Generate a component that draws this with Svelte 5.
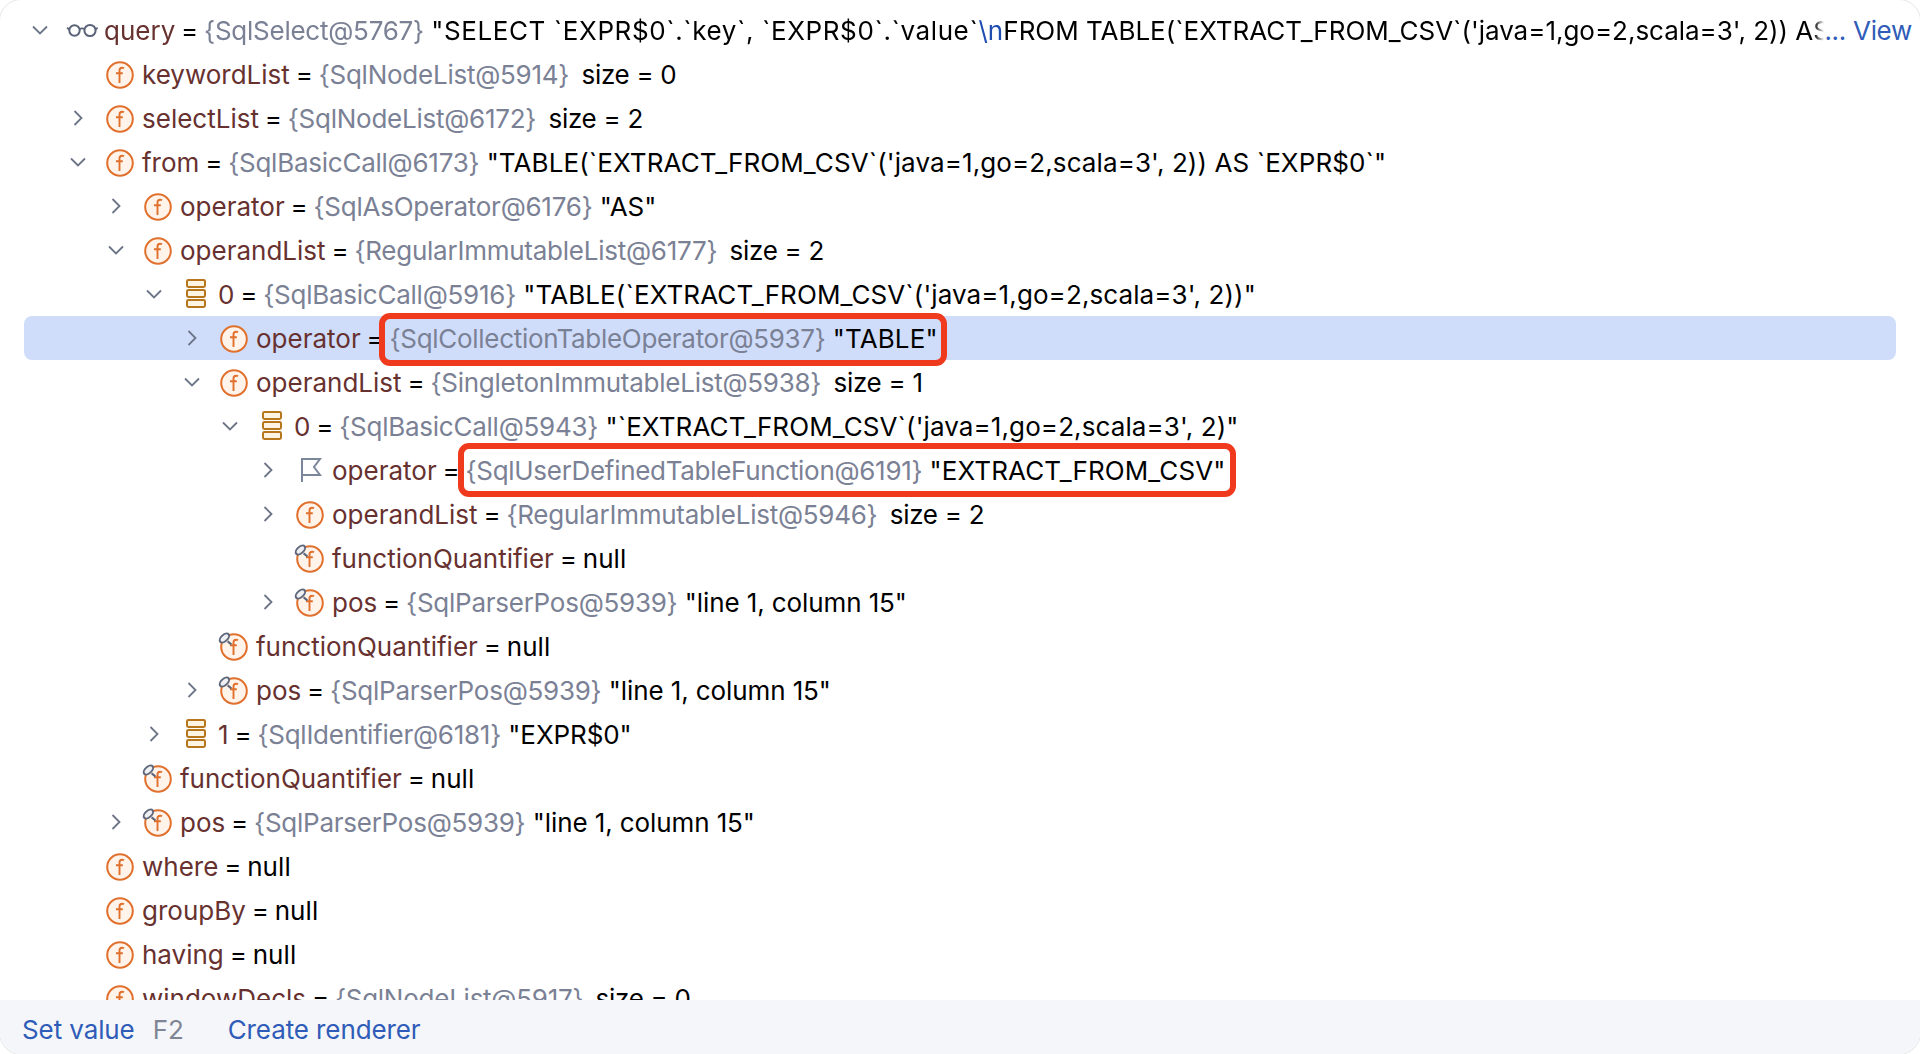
<script>
  const rows = [
    { d: 0, a: 'open', i: 'glasses', n: 'query', t: '{SqlSelect@5767}', first: true },
    { d: 1, i: 'f', n: 'keywordList', t: '{SqlNodeList@5914}', s: 'size = 0' },
    { d: 1, a: 'closed', i: 'f', n: 'selectList', t: '{SqlNodeList@6172}', s: 'size = 2' },
    { d: 1, a: 'open', i: 'f', n: 'from', t: '{SqlBasicCall@6173}', v: '"TABLE(`EXTRACT_FROM_CSV`(\'java=1,go=2,scala=3\', 2)) AS `EXPR$0`"' },
    { d: 2, a: 'closed', i: 'f', n: 'operator', t: '{SqlAsOperator@6176}', v: '"AS"' },
    { d: 2, a: 'open', i: 'f', n: 'operandList', t: '{RegularImmutableList@6177}', s: 'size = 2' },
    { d: 3, a: 'open', i: 'stack', n: '0', t: '{SqlBasicCall@5916}', v: '"TABLE(`EXTRACT_FROM_CSV`(\'java=1,go=2,scala=3\', 2))"' },
    { d: 4, a: 'closed', i: 'f', n: 'operator', t: '{SqlCollectionTableOperator@5937}', v: '"TABLE"', sel: true, mark: 'a' },
    { d: 4, a: 'open', i: 'f', n: 'operandList', t: '{SingletonImmutableList@5938}', s: 'size = 1' },
    { d: 5, a: 'open', i: 'stack', n: '0', t: '{SqlBasicCall@5943}', v: '"`EXTRACT_FROM_CSV`(\'java=1,go=2,scala=3\', 2)"' },
    { d: 6, a: 'closed', i: 'flag', n: 'operator', t: '{SqlUserDefinedTableFunction@6191}', v: '"EXTRACT_FROM_CSV"', mark: 'b' },
    { d: 6, a: 'closed', i: 'f', n: 'operandList', t: '{RegularImmutableList@5946}', s: 'size = 2' },
    { d: 6, i: 'ft', n: 'functionQuantifier', nul: true },
    { d: 6, a: 'closed', i: 'ft', n: 'pos', t: '{SqlParserPos@5939}', v: '"line 1, column 15"' },
    { d: 4, i: 'ft', n: 'functionQuantifier', nul: true },
    { d: 4, a: 'closed', i: 'ft', n: 'pos', t: '{SqlParserPos@5939}', v: '"line 1, column 15"' },
    { d: 3, a: 'closed', i: 'stack', n: '1', t: '{SqlIdentifier@6181}', v: '"EXPR$0"' },
    { d: 2, i: 'ft', n: 'functionQuantifier', nul: true },
    { d: 2, a: 'closed', i: 'ft', n: 'pos', t: '{SqlParserPos@5939}', v: '"line 1, column 15"' },
    { d: 1, i: 'f', n: 'where', nul: true },
    { d: 1, i: 'f', n: 'groupBy', nul: true },
    { d: 1, i: 'f', n: 'having', nul: true },
    { d: 1, i: 'f', n: 'windowDecls', t: '{SqlNodeList@5917}', s: 'size = 0' }
  ];
</script>

{#snippet fIcon(tag)}
  <svg class="ico" viewBox="0 0 32 36" width="32" height="36" aria-hidden="true">
    <circle cx="16" cy="19" r="12.8" fill="#fff3ea" stroke="#e0702c" stroke-width="2" />
    <path d="M20 12.2c-.6-.4-1.2-.5-1.9-.5-1.7 0-2.6 1-2.6 2.8V27M12 17.2h6.8" fill="none" stroke="#e0702c" stroke-width="1.9" />
    {#if tag}
      <path d="M9.6 13.4l3.8 3" fill="none" stroke="#5f677b" stroke-width="2" />
      <ellipse cx="6.4" cy="10" rx="5.6" ry="3.2" transform="rotate(-42 6.4 10)" fill="#eef0f4" stroke="#5f677b" stroke-width="2" />
    {/if}
  </svg>
{/snippet}

<div class="window">
  <div class="tree">
    {#each rows as r}
      <div class="row" class:sel={r.sel} class:lead={r.first} style:padding-left="{4 + r.d * 38}px">
        <span class="arrow">
          {#if r.a === 'open'}
            <svg viewBox="0 0 24 24" width="24" height="24" aria-hidden="true"><path d="M5 8.5l7 7 7-7" fill="none" stroke="#6c7487" stroke-width="1.8" /></svg>
          {:else if r.a === 'closed'}
            <svg viewBox="0 0 24 24" width="24" height="24" aria-hidden="true"><path d="M8.5 5l7 7-7 7" fill="none" stroke="#6c7487" stroke-width="1.8" /></svg>
          {/if}
        </span>
        <span class="icon">
          {#if r.i === 'f'}
            {@render fIcon(false)}
          {:else if r.i === 'ft'}
            {@render fIcon(true)}
          {:else if r.i === 'glasses'}
            <svg class="ico" viewBox="0 0 32 20" width="32" height="20" aria-hidden="true">
              <circle cx="8.5" cy="10.5" r="5.2" fill="none" stroke="#5b6378" stroke-width="2" />
              <circle cx="24" cy="10.5" r="5.6" fill="none" stroke="#5b6378" stroke-width="2" />
              <path d="M13.6 9c1.5-.9 3.3-.9 5 0M3.4 9.4L1 7.8M29.4 9.4L31.6 7.8" fill="none" stroke="#5b6378" stroke-width="1.8" />
            </svg>
          {:else if r.i === 'stack'}
            <svg class="ico" viewBox="0 0 24 32" width="24" height="32" aria-hidden="true">
              <g fill="#fdf4e3" stroke="#b5761c" stroke-width="2">
                <rect x="3" y="2" width="18" height="7" rx="1.4" />
                <rect x="3" y="12" width="18" height="7" rx="1.4" />
                <rect x="3" y="22" width="18" height="7" rx="1.4" />
              </g>
            </svg>
          {:else if r.i === 'flag'}
            <svg class="ico" viewBox="0 0 24 26" width="24" height="26" aria-hidden="true">
              <path d="M4 25V2h18l-6 8 6 8H4" fill="none" stroke="#7a8699" stroke-width="2" />
            </svg>
          {/if}
        </span>
        <span class="text">
          <span class="name">{r.n}</span> <span class="eq">=</span>
          {#if r.first}
            <span class="type">{r.t}</span>
            <span class="val"><span class="wide">"SELECT `EXPR$0`.`key`, `EXPR$0`.`value`</span><span class="esc">\n</span><span class="narrow">FROM TABLE(`EXTRACT_FROM_CSV`('java=1,go=2,scala=3', 2)) AS `EXPR$0`"</span></span>
          {:else if r.nul}
            <span class="val">null</span>
          {:else if r.mark}
            <span class="mark {r.mark}"><span class="type">{r.t}</span> <span class="val">{r.v}</span></span>
          {:else}
            <span class="type">{r.t}</span>
            {#if r.s}<span class="size">{r.s}</span>{:else}<span class="val" class:plain={!r.v.includes('`')}>{r.v}</span>{/if}
          {/if}
        </span>
        {#if r.first}<span class="more">... View</span>{/if}
      </div>
    {/each}
  </div>
  <div class="bar">
    <span class="link">Set value</span>
    <span class="key">F2</span>
    <span class="link create">Create renderer</span>
  </div>
</div>

<style>
  :global(body) { background: #fff; overflow: hidden; }
  .window {
    width: 1920px;
    height: 1054px;
    margin: -1px;
    display: flex;
    flex-direction: column;
    background: #fff;
    overflow: hidden;
    font-family: Inter, "Liberation Sans", sans-serif;
    font-size: 26px;
    border: 1px solid #e6e6e8;
    border-radius: 22px;
  }
  .tree {
    flex: 1;
    min-height: 0;
    overflow: hidden;
    padding: 8px 24px 0;
  }
  .row {
    height: 44px;
    display: flex;
    align-items: center;
    white-space: nowrap;
    border-radius: 8px;
  }
  .row.sel { background: #cfddfb; }
  .row.lead { margin-right: -16px; }
  .arrow {
    width: 24px;
    height: 24px;
    flex: none;
    margin-right: 14px;
  }
  .arrow svg, .ico { display: block; }
  .icon {
    width: 32px;
    height: 36px;
    flex: none;
    margin-right: 6px;
    display: flex;
    align-items: center;
    justify-content: center;
  }
  .text { flex: 1; min-width: 0; white-space: pre; height: 44px; line-height: 46px; }
  .lead .text {
    overflow: hidden;
    -webkit-mask-image: linear-gradient(to left, transparent 0, #000 10px);
    mask-image: linear-gradient(to left, transparent 0, #000 10px);
  }
  .name { color: #67312f; }
  .eq { color: #000; margin: 0 -1.5px; }
  .val { color: #000; letter-spacing: 0.1px; }
  .val.plain { letter-spacing: -0.1px; }
  .wide { letter-spacing: 0.6px; }
  .narrow { letter-spacing: -0.02px; }
  .type { color: #7b8195; letter-spacing: -0.25px; }
  .size { color: #000; margin-left: 5px; letter-spacing: -0.3px; }
  .esc { color: #1f4eb0; }
  .mark { position: relative; display: inline-block; }
  .mark .type { letter-spacing: -0.3px; }
  .mark::after {
    content: "";
    position: absolute;
    border: 6px solid #f03a1e;
    border-radius: 11px;
  }
  .mark.a::after { left: -11px; right: -9px; top: -3px; bottom: -4px; }
  .mark.b::after { left: -8px; right: -11px; top: -5px; bottom: -3px; }
  .more { flex: none; color: #2f5cb8; letter-spacing: -0.3px; }
  .bar {
    height: 54px;
    flex: none;
    display: flex;
    align-items: center;
    background: #f5f6f9;
    padding: 4px 22px 0;
    box-sizing: border-box;
    color: #2f5cb8;
    letter-spacing: -0.1px;
  }
  .key { color: #7f8594; margin-left: 18px; }
  .create { margin-left: 44px; }
</style>
